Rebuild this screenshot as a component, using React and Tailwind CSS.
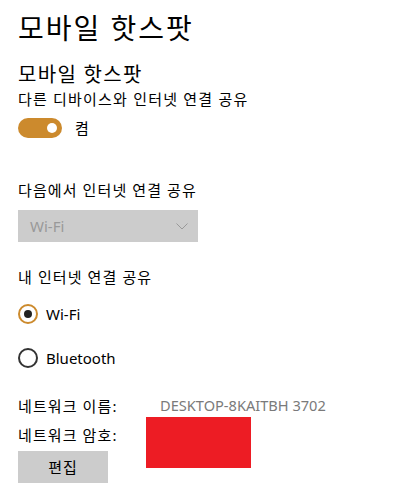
import React from 'react';

const font = { fontFamily: '"Segoe UI", "Noto Sans", "Noto Sans CJK KR", sans-serif' };

const Radio = ({ checked, label, className = '' }) => (
  <div className={`flex items-center h-[20px] gap-[8px] ${className}`}>
    <div
      className={`w-[20px] h-[20px] rounded-full border-2 flex items-center justify-center ${
        checked ? 'border-[#cc8a2d]' : 'border-[#333]'
      }`}
    >
      {checked && <div className="w-[8px] h-[8px] rounded-full bg-[#222]" />}
    </div>
    <span className="text-[15px] text-black">{label}</span>
  </div>
);

const App = () => {
  return (
    <div className="w-[416px] h-[497px] bg-white px-[18px] text-black overflow-hidden" style={font}>
      <h1 className="text-[28px] leading-[56px] font-normal tracking-[2px]">모바일 핫스팟</h1>

      <h2 className="mt-[5px] text-[20px] leading-[28px] tracking-[1.3px]">모바일 핫스팟</h2>
      <p className="text-[15px] leading-[20px] tracking-[1.2px]">다른 디바이스와 인터넷 연결 공유</p>

      {/* Toggle */}
      <div className="mt-[9px] h-[20px] flex items-center gap-[13px]">
        <div className="w-[44px] h-[20px] rounded-full bg-[#cc8a2d] flex items-center justify-end pr-[5px]">
          <div className="w-[10px] h-[10px] rounded-full bg-white" />
        </div>
        <span className="text-[15px]">켬</span>
      </div>

      <p className="mt-[42px] text-[15px] leading-[20px] tracking-[1.1px]">다음에서 인터넷 연결 공유</p>

      {/* Dropdown */}
      <div className="mt-[10px] w-[180px] h-[32px] bg-[#cccccc] flex items-center justify-between pl-[12px] pr-[10px]">
        <span className="text-[15px] text-[#999]">Wi-Fi</span>
        <svg width="12" height="7" viewBox="0 0 12 7" fill="none">
          <path d="M0.5 0.5 L6 6 L11.5 0.5" stroke="#999" strokeWidth="1" />
        </svg>
      </div>

      <p className="mt-[25px] text-[15px] leading-[20px] tracking-[1.1px]">내 인터넷 연결 공유</p>

      <Radio checked label="Wi-Fi" className="mt-[17px]" />
      <Radio label="Bluetooth" className="mt-[24px]" />

      {/* Network info */}
      <div className="relative mt-[28px]">
        <div className="flex h-[20px] items-center text-[15px]">
          <span className="w-[142px] tracking-[1.1px]">네트워크 이름:</span>
          <span className="text-[#7a7a7a] text-[14.6px]">DESKTOP-8KAITBH 3702</span>
        </div>
        <div className="mt-[9px] flex h-[20px] items-center text-[15px]">
          <span className="tracking-[1.1px]">네트워크 암호:</span>
        </div>
        <button className="mt-[6px] w-[90px] h-[32px] bg-[#cccccc] text-[15px] tracking-[1px] flex items-center justify-center">
          편집
        </button>
        <div className="absolute left-[128px] top-[21px] w-[105px] h-[51px] bg-[#ed1c24]" />
      </div>
    </div>
  );
};

export default App;
